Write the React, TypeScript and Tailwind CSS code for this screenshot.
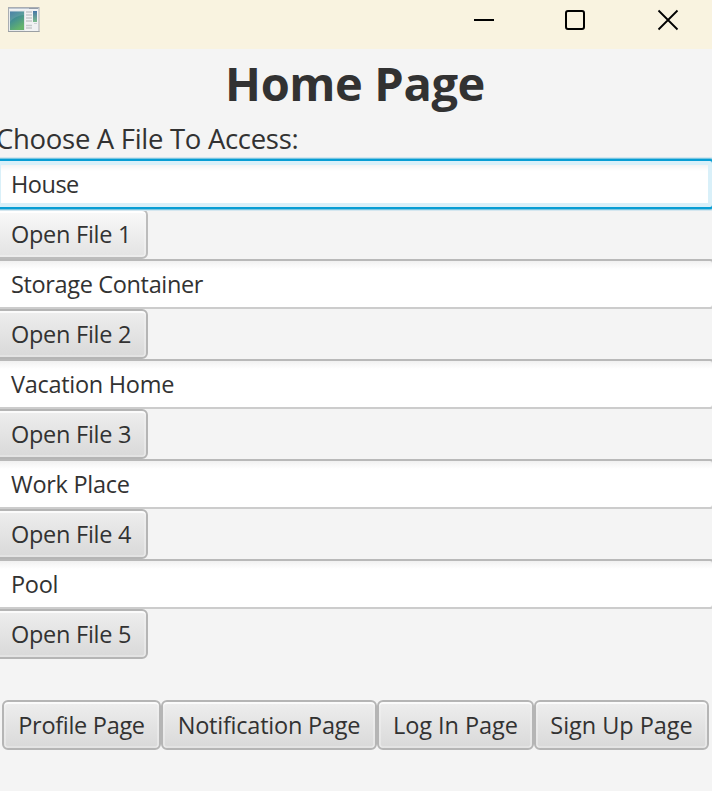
const files = [
  { name: 'House', spacing: 'tracking-[-0.5px]', button: 'Open File 1' },
  { name: 'Storage Container', spacing: 'tracking-[-0.35px]', button: 'Open File 2' },
  { name: 'Vacation Home', spacing: 'tracking-[-0.28px]', button: 'Open File 3' },
  { name: 'Work Place', spacing: 'tracking-[-0.28px]', button: 'Open File 4' },
  { name: 'Pool', spacing: 'tracking-[-0.3px]', button: 'Open File 5' },
];

const pages = [
  { label: 'Profile Page', size: 'w-[159px] tracking-[-0.3px]' },
  { label: 'Notification Page', size: 'w-[216px] tracking-[-0.22px]' },
  { label: 'Log In Page', size: 'w-[157px] tracking-[-0.05px]' },
  { label: 'Sign Up Page', size: 'w-[175px] tracking-[-0.05px]' },
];

const buttonBase =
  'flex h-[50px] shrink-0 items-center whitespace-nowrap rounded-[6px] border-2 text-[23.5px] leading-8';
const buttonFace =
  'border-[#b5b5b5] bg-linear-to-b from-[#eeeeee] to-[#d9d9d9] shadow-[inset_0_2px_0_#fbfbfb,inset_2px_0_0_#f1f1f180,inset_-2px_0_0_#f1f1f180,inset_0_-2px_0_#e3e3e3]';
const buttonHover =
  'border-[#bcbcbc] bg-linear-to-b from-[#f9f9f9] to-[#e3e3e3] shadow-[inset_0_2px_0_#ffffff,inset_-2px_0_0_#f6f6f680,inset_0_-2px_0_#ececec]';

const fieldBase = 'mr-[-2px] flex h-[50px] shrink-0 items-center border-2 text-[23.5px] leading-8';
const fieldFocused =
  'relative z-10 ml-[-5px] rounded-[4px] border-[#079dd4] bg-[linear-gradient(to_bottom,#f3f3f3_4px,#ffffff_10px)] pl-[14px] shadow-[0_0_0_1px_#79c6e0,0_0_0_2px_#d4e6ef,inset_0_0_0_4px_#d9f0f9]';
const fieldIdle =
  'ml-[-6px] rounded-[4px] border-t-[#b9b9b9] border-b-[#cccccc] border-x-[#c5c5c5] bg-[linear-gradient(to_bottom,#f1f1f1,#ffffff_8px)] pl-[15px]';

function TitleBar() {
  return (
    <header className="flex h-[49px] shrink-0 justify-between bg-[#f9f3e0]">
      <svg className="ml-[8px] mt-[7px]" width="32" height="26" viewBox="0 0 32 26">
        <defs>
          <linearGradient id="pane" x1="0" y1="0" x2="0.5" y2="1">
            <stop offset="0" stopColor="#33709c" />
            <stop offset="0.5" stopColor="#45928f" />
            <stop offset="1" stopColor="#64b46c" />
          </linearGradient>
          <linearGradient id="side" x1="0" y1="0" x2="0" y2="1">
            <stop offset="0" stopColor="#4676a8" />
            <stop offset="1" stopColor="#7dbb8c" />
          </linearGradient>
        </defs>
        <rect x="0.5" y="0.5" width="30.5" height="24" fill="#f1f2f3" stroke="#a9adb2" />
        <path d="M0 24.500h31.500" stroke="#9b9fa3" />
        <path d="M1 1.500h30" stroke="#bcc5d1" />
        <path d="M21 1.500h9" stroke="#949da9" />
        <rect x="1.500" y="3.500" width="15.500" height="20" fill="#dfe3e6" />
        <rect x="2" y="4.500" width="14" height="18.500" fill="url(#pane)" />
        <path d="M2 4.500h14v3.500C10 8.500 5 11 2 15z" fill="#fff" fillOpacity="0.12" />
        <path d="M18 5h6M18 8h6M18 11h6M18 14h6M18 18.500h6M18 21h6" stroke="#c6c9cb" strokeWidth="1.6" />
        <rect x="25" y="4" width="4" height="11" fill="url(#side)" />
        <path d="M26 16.500h3" stroke="#cfd2d5" />
      </svg>
      <svg width="262" height="49" viewBox="0 0 262 49" fill="none" stroke="#000">
        <path d="M24 20h20" strokeWidth="2" />
        <rect x="116" y="11" width="18" height="18" rx="2" strokeWidth="2" />
        <path d="M208.500 10.500l19 19M227.500 10.500l-19 19" strokeWidth="1.8" />
      </svg>
    </header>
  );
}

export default function App() {
  return (
    <div className="flex h-[791px] w-[712px] flex-col overflow-hidden bg-[#f4f4f4] font-['Open_Sans','Noto_Sans',sans-serif] text-[#323232]">
      <TitleBar />
      <h1 className="h-[71px] shrink-0 pr-[2px] text-center text-[47px] font-bold leading-[68px] tracking-[-0.4px]">
        Home Page
      </h1>
      <p className="ml-[-4px] h-[39px] shrink-0 whitespace-nowrap text-[27.5px] leading-[38px] tracking-[-0.3px]">
        Choose A File To Access:
      </p>
      <main className="flex flex-col">
        {files.map((file, i) => (
          <section key={file.name} className="flex h-[100px] flex-col">
            <div className={`${fieldBase} ${file.spacing} ${i === 0 ? fieldFocused : fieldIdle}`}>{file.name}</div>
            <button
              className={`${buttonBase} ml-[-6px] w-[154px] pl-[15px] tracking-[-0.27px] ${i === 0 ? buttonHover : buttonFace}`}
            >
              {file.button}
            </button>
          </section>
        ))}
      </main>
      <nav className="mt-[41px] flex pl-[2px]">
        {pages.map((page) => (
          <button key={page.label} className={`${buttonBase} ${buttonFace} ${page.size} justify-center`}>
            {page.label}
          </button>
        ))}
      </nav>
    </div>
  );
}
